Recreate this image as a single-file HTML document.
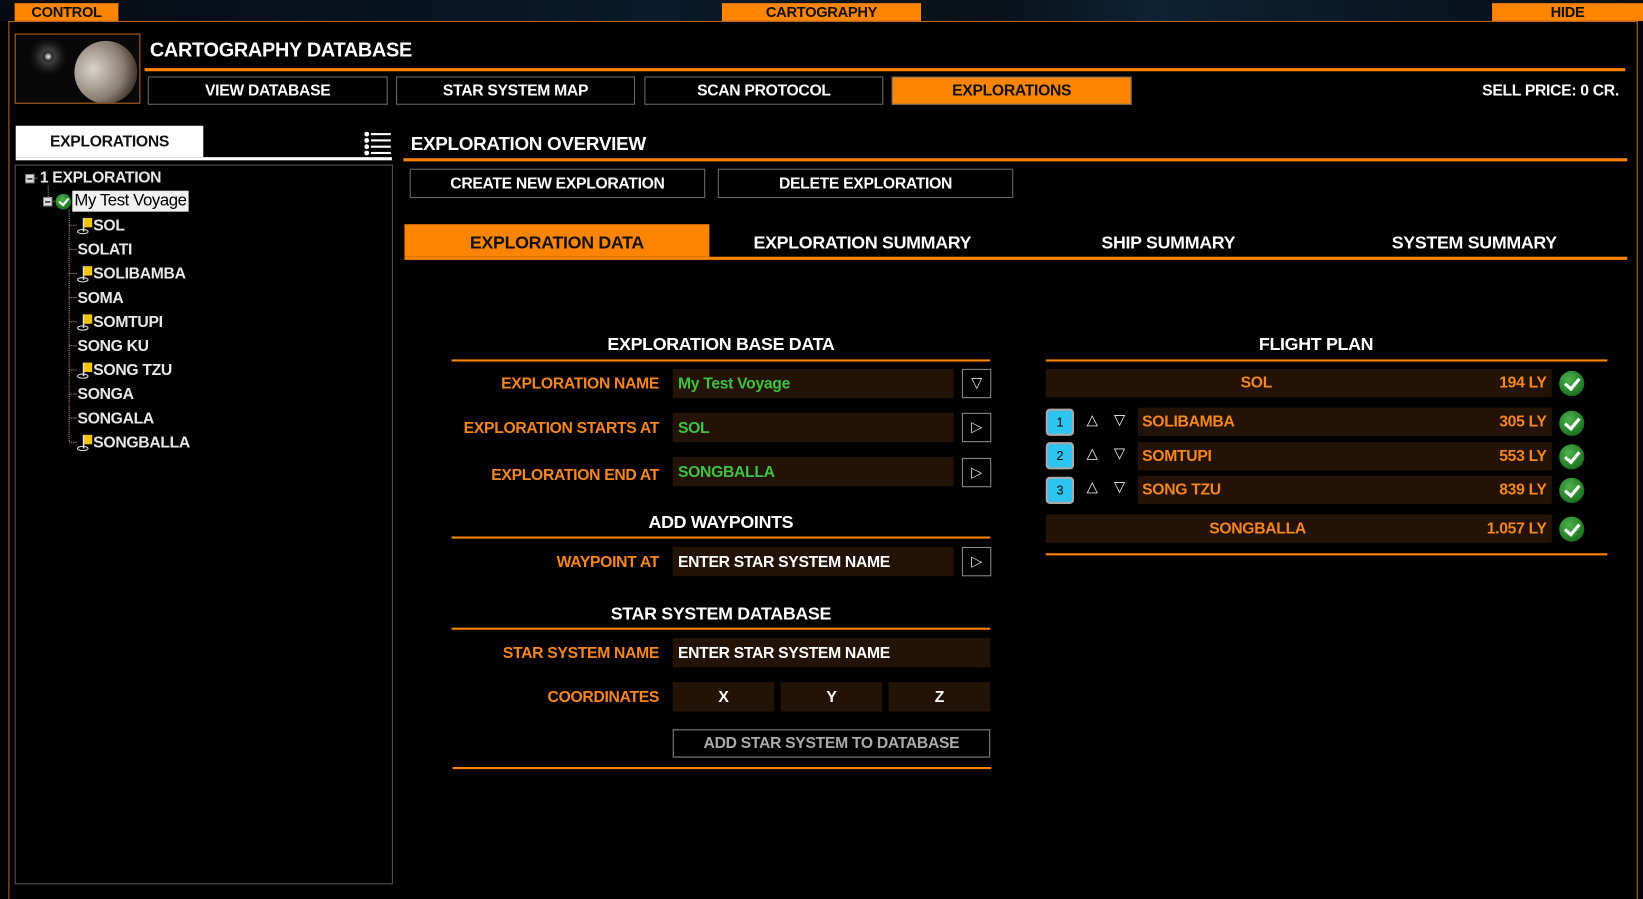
<!DOCTYPE html>
<html><head><meta charset="utf-8"><style>
html,body{margin:0;padding:0;background:#000;overflow:hidden;width:1643px;height:899px}
#s{position:absolute;left:0;top:0;width:1568px;height:858px;transform:scale(1.04783);transform-origin:0 0;font-family:"Liberation Sans Narrow","Liberation Sans",sans-serif;font-weight:bold;color:#fff;background:#000;letter-spacing:-0.3px}
.a{position:absolute}
.o{background:#ff8400}
.t{position:absolute;text-align:center;font-size:15px;line-height:17px}
.btn{position:absolute;border:1px solid #6a6a6a;box-sizing:border-box;text-align:center;font-size:15px;color:#fff;background:#000}
.lbl{position:absolute;right:939px;color:#f7861f;font-size:15px;text-align:right;white-space:nowrap}
.fld{position:absolute;background:#221306;box-sizing:border-box;font-size:15px;padding-left:5px;white-space:nowrap}
.sb{position:absolute;width:28px;height:28px;border:1px solid #8a8a8a;box-sizing:border-box;text-align:center;font-size:14px;line-height:26px;color:#ddd;font-family:"DejaVu Sans",sans-serif;font-weight:normal}
.tr{position:absolute;font-size:15px;line-height:18px;color:#e8e8e8;white-space:nowrap}
.ck{position:absolute;width:24px;height:24px;border-radius:50%;background:radial-gradient(circle at 40% 35%,#4cb24c,#0c5a12);}
.ck:after{content:"";position:absolute;left:8px;top:4px;width:6px;height:11px;border:solid #fff;border-width:0 3.5px 3.5px 0;transform:rotate(40deg)}
.ck.sm:after{left:4.5px;top:2px;width:3.5px;height:7px;border-width:0 2.5px 2.5px 0}
.num{position:absolute;width:27px;height:26px;background:#2ec4f0;border:2px solid #aaa;border-radius:4px;box-sizing:border-box;color:#000;text-align:center;font-size:12px;line-height:22px;font-family:"Liberation Sans",sans-serif;font-weight:normal}
.ar{position:absolute;color:#eee;font-size:14px;font-family:"DejaVu Sans",sans-serif;font-weight:normal}
.bar{position:absolute;background:#221306;height:27px;color:#f7861f;font-size:15px;line-height:27px}
</style></head><body><div id="s">
<div class="a" style="left:0;top:0;width:1568px;height:20px;background:linear-gradient(90deg,#050a12,#0a1a2a 40%,#081018 60%,#0e2233 70%,#060c14)"></div>
<div class="a o t" style="left:14px;top:3px;width:99px;height:17px;color:#111;font-size:14px">CONTROL</div>
<div class="a o t" style="left:689px;top:3px;width:190px;height:17px;color:#111;font-size:14px">CARTOGRAPHY</div>
<div class="a o t" style="left:1424px;top:3px;width:144px;height:17px;color:#111;font-size:14px">HIDE</div>
<div class="a" style="left:8px;top:20px;width:1555px;height:838px;border:1px solid #b8661e;border-bottom:none;box-sizing:border-box;background:#000"></div>
<div class="a" style="left:14px;top:32px;width:120px;height:67px;border:1px solid #b8661e;box-sizing:border-box;background:#080808;overflow:hidden">
<div class="a" style="left:26px;top:16px;width:10px;height:10px;border-radius:50%;background:radial-gradient(#fff,#fff6 40%,transparent 70%);box-shadow:0 0 10px 5px #fff5"></div>
<div class="a" style="left:56px;top:6px;width:60px;height:60px;border-radius:50%;background:radial-gradient(circle at 30% 45%,#d8d4ce,#8a7c70 55%,#2a2420 85%)"></div></div>
<div class="a" style="left:143px;top:38px;font-size:19px;line-height:22px">CARTOGRAPHY DATABASE</div>
<div class="a o" style="left:138px;top:65px;width:1413px;height:3px"></div>
<div class="btn" style="left:141px;top:73px;width:229px;height:27px;line-height:26px">VIEW DATABASE</div>
<div class="btn" style="left:378px;top:73px;width:228px;height:27px;line-height:26px">STAR SYSTEM MAP</div>
<div class="btn" style="left:615px;top:73px;width:228px;height:27px;line-height:26px">SCAN PROTOCOL</div>
<div class="btn" style="left:851px;top:73px;width:229px;height:27px;line-height:26px;background:#ff8400;color:#111">EXPLORATIONS</div>
<div class="a" style="right:23px;top:78px;font-size:15px">SELL PRICE: 0 CR.</div>
<div class="a t" style="left:15px;top:120px;width:179px;height:30px;background:#fff;color:#111;line-height:31px">EXPLORATIONS</div>
<div class="a" style="left:15px;top:150px;width:359px;height:3px;background:#fff"></div>
<svg class="a" style="left:347px;top:125px" width="27" height="24"><g fill="#fff"><circle cx="3" cy="3" r="2.3"/><circle cx="3" cy="9" r="2.3"/><circle cx="3" cy="15" r="2.3"/><circle cx="3" cy="21" r="2.3"/><rect x="7" y="2" width="19" height="2"/><rect x="7" y="8" width="19" height="2"/><rect x="7" y="14" width="19" height="2"/><rect x="7" y="20" width="19" height="2"/></g></svg>
<div class="a" style="left:14px;top:157px;width:361px;height:687px;border:1px solid #555;box-sizing:border-box"></div>
<svg class="a" style="left:20px;top:160px" width="60" height="270"><g stroke="#c9a070" stroke-dasharray="1 1" fill="none"><path d="M9 10H17M26 17V32M29 32H37M46 40V262M46 55H54M46 78H54M46 101H54M46 124H54M46 147H54M46 170H54M46 193H54M46 216H54M46 239H54M46 262H54"/></g>
<rect x="4.5" y="6.5" width="8" height="8" fill="#ddd" stroke="#888"/><rect x="6" y="10" width="5" height="1.5" fill="#333"/>
<rect x="21.5" y="28.5" width="8" height="8" fill="#ddd" stroke="#888"/><rect x="23" y="32" width="5" height="1.5" fill="#333"/></svg>
<div class="tr" style="left:38px;top:161px;font-size:15px">1 EXPLORATION</div>
<div class="ck sm" style="left:53px;top:185px;width:15px;height:15px"></div>
<div class="tr" style="left:69px;top:182px;background:#f0f0f0;color:#000;padding:1px 2px;font-family:'Liberation Sans',sans-serif;font-weight:normal;font-size:16px;letter-spacing:-0.4px">My Test Voyage</div>
<div class="tr" style="left:89px;top:207px">SOL</div>
<div class="tr" style="left:74px;top:230px">SOLATI</div>
<div class="tr" style="left:89px;top:253px">SOLIBAMBA</div>
<div class="tr" style="left:74px;top:276px">SOMA</div>
<div class="tr" style="left:89px;top:299px">SOMTUPI</div>
<div class="tr" style="left:74px;top:322px">SONG KU</div>
<div class="tr" style="left:89px;top:345px">SONG TZU</div>
<div class="tr" style="left:74px;top:368px">SONGA</div>
<div class="tr" style="left:74px;top:391px">SONGALA</div>
<div class="tr" style="left:89px;top:414px">SONGBALLA</div>
<svg class="a" style="left:72px;top:207px" width="17" height="230"><defs><g id="f"><rect x="8" y="1" width="8" height="9" fill="#f4c400"/><rect x="7" y="1" width="1.5" height="13" fill="#ddd"/><ellipse cx="7" cy="14" rx="5" ry="2" fill="none" stroke="#ddd"/></g></defs>
<use href="#f" y="0"/><use href="#f" y="46"/><use href="#f" y="92"/><use href="#f" y="138"/><use href="#f" y="207"/></svg>
<div class="a" style="left:392px;top:127px;font-size:18px">EXPLORATION OVERVIEW</div>
<div class="a o" style="left:385px;top:151px;width:1168px;height:3px"></div>
<div class="btn" style="left:391px;top:161px;width:282px;height:28px;line-height:27px">CREATE NEW EXPLORATION</div>
<div class="btn" style="left:685px;top:161px;width:282px;height:28px;line-height:27px">DELETE EXPLORATION</div>
<div class="a o" style="left:386px;top:214px;width:291px;height:31px"></div>
<div class="a o" style="left:386px;top:245px;width:1167px;height:3px"></div>
<div class="t" style="left:386px;top:223px;width:291px;color:#111;font-size:17px">EXPLORATION DATA</div>
<div class="t" style="left:677px;top:223px;width:292px;font-size:17px">EXPLORATION SUMMARY</div>
<div class="t" style="left:969px;top:223px;width:292px;font-size:17px">SHIP SUMMARY</div>
<div class="t" style="left:1261px;top:223px;width:292px;font-size:17px">SYSTEM SUMMARY</div>

<div class="t" style="left:431px;top:320px;width:514px;font-size:17px">EXPLORATION BASE DATA</div>
<div class="a o" style="left:431px;top:343px;width:514px;height:2px"></div>
<div class="lbl" style="top:358px">EXPLORATION NAME</div>
<div class="fld" style="left:642px;top:352px;width:268px;height:28px;line-height:29px;color:#3fc23f">My Test Voyage</div>
<div class="sb" style="left:918px;top:352px">▽</div>
<div class="lbl" style="top:400px">EXPLORATION STARTS AT</div>
<div class="fld" style="left:642px;top:394px;width:268px;height:28px;line-height:29px;color:#3fc23f">SOL</div>
<div class="sb" style="left:918px;top:394px">▷</div>
<div class="lbl" style="top:445px">EXPLORATION END AT</div>
<div class="fld" style="left:642px;top:436px;width:268px;height:28px;line-height:29px;color:#3fc23f">SONGBALLA</div>
<div class="sb" style="left:918px;top:437px">▷</div>
<div class="t" style="left:431px;top:490px;width:514px;font-size:17px">ADD WAYPOINTS</div>
<div class="a o" style="left:431px;top:512px;width:514px;height:2px"></div>
<div class="lbl" style="top:528px">WAYPOINT AT</div>
<div class="fld" style="left:642px;top:522px;width:268px;height:28px;line-height:29px">ENTER STAR SYSTEM NAME</div>
<div class="sb" style="left:918px;top:522px">▷</div>
<div class="t" style="left:431px;top:577px;width:514px;font-size:17px">STAR SYSTEM DATABASE</div>
<div class="a o" style="left:431px;top:599px;width:514px;height:2px"></div>
<div class="lbl" style="top:615px">STAR SYSTEM NAME</div>
<div class="fld" style="left:642px;top:609px;width:303px;height:28px;line-height:29px">ENTER STAR SYSTEM NAME</div>
<div class="lbl" style="top:657px">COORDINATES</div>
<div class="fld" style="left:642px;top:651px;width:97px;height:28px;line-height:29px;text-align:center;padding:0">X</div>
<div class="fld" style="left:745px;top:651px;width:97px;height:28px;line-height:29px;text-align:center;padding:0">Y</div>
<div class="fld" style="left:848px;top:651px;width:97px;height:28px;line-height:29px;text-align:center;padding:0">Z</div>
<div class="btn" style="left:642px;top:696px;width:303px;height:27px;line-height:26px;color:#aaa;border-color:#888">ADD STAR SYSTEM TO DATABASE</div>
<div class="a o" style="left:432px;top:732px;width:514px;height:2px"></div>

<div class="t" style="left:998px;top:320px;width:516px;font-size:17px">FLIGHT PLAN</div>
<div class="a o" style="left:998px;top:343px;width:536px;height:2px"></div>
<div class="bar" style="left:998px;top:352px;width:483px;line-height:28px"><span class="a" style="left:186px">SOL</span><span class="a" style="right:5px">194 LY</span></div>
<div class="ck" style="left:1488px;top:354px"></div>
<div class="num" style="left:998px;top:390px">1</div><div class="ar" style="left:1037px;top:393px">△</div><div class="ar" style="left:1063px;top:393px">▽</div>
<div class="bar" style="left:1086px;top:389px;width:395px;line-height:28px"><span class="a" style="left:4px">SOLIBAMBA</span><span class="a" style="right:5px">305 LY</span></div>
<div class="ck" style="left:1488px;top:392px"></div>
<div class="num" style="left:998px;top:422px">2</div><div class="ar" style="left:1037px;top:425px">△</div><div class="ar" style="left:1063px;top:425px">▽</div>
<div class="bar" style="left:1086px;top:422px;width:395px;line-height:28px"><span class="a" style="left:4px">SOMTUPI</span><span class="a" style="right:5px">553 LY</span></div>
<div class="ck" style="left:1488px;top:424px"></div>
<div class="num" style="left:998px;top:455px">3</div><div class="ar" style="left:1037px;top:457px">△</div><div class="ar" style="left:1063px;top:457px">▽</div>
<div class="bar" style="left:1086px;top:454px;width:395px;line-height:28px"><span class="a" style="left:4px">SONG TZU</span><span class="a" style="right:5px">839 LY</span></div>
<div class="ck" style="left:1488px;top:456px"></div>
<div class="bar" style="left:998px;top:491px;width:483px;line-height:28px"><span class="a" style="left:156px">SONGBALLA</span><span class="a" style="right:5px">1.057 LY</span></div>
<div class="ck" style="left:1488px;top:493px"></div>
<div class="a o" style="left:998px;top:528px;width:536px;height:2px"></div>
</div></body></html>
